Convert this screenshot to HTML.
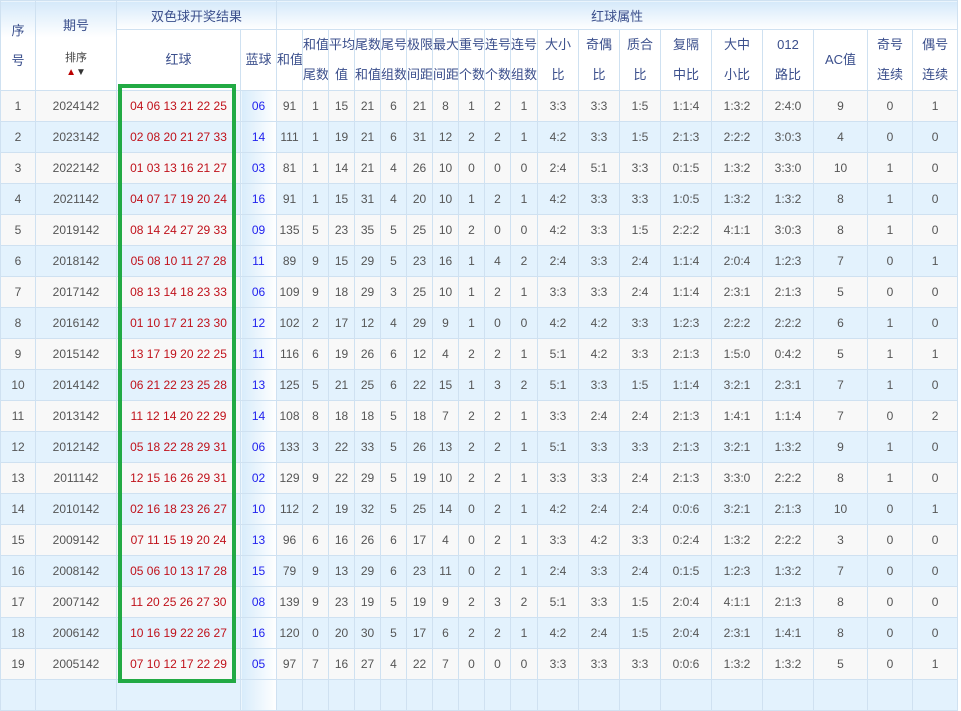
<!DOCTYPE html>
<html><head><meta charset="utf-8"><style>
body{margin:0;background:#fff;width:961px;height:685px;overflow:hidden;position:relative;font-family:"Liberation Sans","Noto Sans CJK SC",sans-serif;}
table{border-collapse:collapse;table-layout:fixed;width:957px;font-size:12px;color:#555;}
td,th{border:1px solid #cfe1f1;text-align:center;padding:0;overflow:hidden;white-space:nowrap;font-weight:normal;}
th{color:#3b4f8c;background:#fff;font-size:13px;}
tr.h1 th{height:28px;background:linear-gradient(#d5e9fa,#fff);}
tr.h2 th{height:60px;line-height:30px;}
tbody tr{height:31px;}
tbody tr:nth-child(odd) td{background:#f8f8f8;}
tbody tr:nth-child(even) td{background:#e3f2fd;}
td.r{color:#c0111a;}
tbody tr td.b{color:#2222ee;background:linear-gradient(90deg,#d8ecfb,#fff);}
.box{position:absolute;left:118px;top:84px;width:118px;height:599px;border:4px solid #22aa44;box-sizing:border-box;}
.ar{font-size:10px;line-height:8px;display:block;margin-top:4px}
</style></head><body>
<table>
<colgroup><col style="width:35px"><col style="width:81px"><col style="width:124px"><col style="width:36px">
<col style="width:26px"><col style="width:26px"><col style="width:26px"><col style="width:26px"><col style="width:26px"><col style="width:26px"><col style="width:26px"><col style="width:26px"><col style="width:26px"><col style="width:27px">
<col style="width:41px"><col style="width:41px"><col style="width:41px"><col style="width:51px"><col style="width:51px"><col style="width:51px"><col style="width:54px"><col style="width:45px"><col style="width:45px"></colgroup>
<thead>
<tr class="h1"><th rowspan="2" style="line-height:30px;background:linear-gradient(#d5e9fa,#fff 40%)">序<br>号</th><th rowspan="2" style="background:linear-gradient(#d5e9fa,#fff 40%)">期号<br><br><span style="font-size:11px;color:#444">排序</span><span class="ar"><span style="color:#b00">&#9650;</span><span style="color:#333">&#9660;</span></span></th><th colspan="2">双色球开奖结果</th><th colspan="19">红球属性</th></tr>
<tr class="h2"><th>红球</th><th>蓝球</th><th>和值</th><th>和值<br>尾数</th><th>平均<br>值</th><th>尾数<br>和值</th><th>尾号<br>组数</th><th>极限<br>间距</th><th>最大<br>间距</th><th>重号<br>个数</th><th>连号<br>个数</th><th>连号<br>组数</th><th>大小<br>比</th><th>奇偶<br>比</th><th>质合<br>比</th><th>复隔<br>中比</th><th>大中<br>小比</th><th>012<br>路比</th><th>AC值</th><th>奇号<br>连续</th><th>偶号<br>连续</th></tr>
</thead>
<tbody>
<tr><td>1</td><td>2024142</td><td class="r">04 06 13 21 22 25</td><td class="b">06</td><td>91</td><td>1</td><td>15</td><td>21</td><td>6</td><td>21</td><td>8</td><td>1</td><td>2</td><td>1</td><td>3:3</td><td>3:3</td><td>1:5</td><td>1:1:4</td><td>1:3:2</td><td>2:4:0</td><td>9</td><td>0</td><td>1</td></tr>
<tr><td>2</td><td>2023142</td><td class="r">02 08 20 21 27 33</td><td class="b">14</td><td>111</td><td>1</td><td>19</td><td>21</td><td>6</td><td>31</td><td>12</td><td>2</td><td>2</td><td>1</td><td>4:2</td><td>3:3</td><td>1:5</td><td>2:1:3</td><td>2:2:2</td><td>3:0:3</td><td>4</td><td>0</td><td>0</td></tr>
<tr><td>3</td><td>2022142</td><td class="r">01 03 13 16 21 27</td><td class="b">03</td><td>81</td><td>1</td><td>14</td><td>21</td><td>4</td><td>26</td><td>10</td><td>0</td><td>0</td><td>0</td><td>2:4</td><td>5:1</td><td>3:3</td><td>0:1:5</td><td>1:3:2</td><td>3:3:0</td><td>10</td><td>1</td><td>0</td></tr>
<tr><td>4</td><td>2021142</td><td class="r">04 07 17 19 20 24</td><td class="b">16</td><td>91</td><td>1</td><td>15</td><td>31</td><td>4</td><td>20</td><td>10</td><td>1</td><td>2</td><td>1</td><td>4:2</td><td>3:3</td><td>3:3</td><td>1:0:5</td><td>1:3:2</td><td>1:3:2</td><td>8</td><td>1</td><td>0</td></tr>
<tr><td>5</td><td>2019142</td><td class="r">08 14 24 27 29 33</td><td class="b">09</td><td>135</td><td>5</td><td>23</td><td>35</td><td>5</td><td>25</td><td>10</td><td>2</td><td>0</td><td>0</td><td>4:2</td><td>3:3</td><td>1:5</td><td>2:2:2</td><td>4:1:1</td><td>3:0:3</td><td>8</td><td>1</td><td>0</td></tr>
<tr><td>6</td><td>2018142</td><td class="r">05 08 10 11 27 28</td><td class="b">11</td><td>89</td><td>9</td><td>15</td><td>29</td><td>5</td><td>23</td><td>16</td><td>1</td><td>4</td><td>2</td><td>2:4</td><td>3:3</td><td>2:4</td><td>1:1:4</td><td>2:0:4</td><td>1:2:3</td><td>7</td><td>0</td><td>1</td></tr>
<tr><td>7</td><td>2017142</td><td class="r">08 13 14 18 23 33</td><td class="b">06</td><td>109</td><td>9</td><td>18</td><td>29</td><td>3</td><td>25</td><td>10</td><td>1</td><td>2</td><td>1</td><td>3:3</td><td>3:3</td><td>2:4</td><td>1:1:4</td><td>2:3:1</td><td>2:1:3</td><td>5</td><td>0</td><td>0</td></tr>
<tr><td>8</td><td>2016142</td><td class="r">01 10 17 21 23 30</td><td class="b">12</td><td>102</td><td>2</td><td>17</td><td>12</td><td>4</td><td>29</td><td>9</td><td>1</td><td>0</td><td>0</td><td>4:2</td><td>4:2</td><td>3:3</td><td>1:2:3</td><td>2:2:2</td><td>2:2:2</td><td>6</td><td>1</td><td>0</td></tr>
<tr><td>9</td><td>2015142</td><td class="r">13 17 19 20 22 25</td><td class="b">11</td><td>116</td><td>6</td><td>19</td><td>26</td><td>6</td><td>12</td><td>4</td><td>2</td><td>2</td><td>1</td><td>5:1</td><td>4:2</td><td>3:3</td><td>2:1:3</td><td>1:5:0</td><td>0:4:2</td><td>5</td><td>1</td><td>1</td></tr>
<tr><td>10</td><td>2014142</td><td class="r">06 21 22 23 25 28</td><td class="b">13</td><td>125</td><td>5</td><td>21</td><td>25</td><td>6</td><td>22</td><td>15</td><td>1</td><td>3</td><td>2</td><td>5:1</td><td>3:3</td><td>1:5</td><td>1:1:4</td><td>3:2:1</td><td>2:3:1</td><td>7</td><td>1</td><td>0</td></tr>
<tr><td>11</td><td>2013142</td><td class="r">11 12 14 20 22 29</td><td class="b">14</td><td>108</td><td>8</td><td>18</td><td>18</td><td>5</td><td>18</td><td>7</td><td>2</td><td>2</td><td>1</td><td>3:3</td><td>2:4</td><td>2:4</td><td>2:1:3</td><td>1:4:1</td><td>1:1:4</td><td>7</td><td>0</td><td>2</td></tr>
<tr><td>12</td><td>2012142</td><td class="r">05 18 22 28 29 31</td><td class="b">06</td><td>133</td><td>3</td><td>22</td><td>33</td><td>5</td><td>26</td><td>13</td><td>2</td><td>2</td><td>1</td><td>5:1</td><td>3:3</td><td>3:3</td><td>2:1:3</td><td>3:2:1</td><td>1:3:2</td><td>9</td><td>1</td><td>0</td></tr>
<tr><td>13</td><td>2011142</td><td class="r">12 15 16 26 29 31</td><td class="b">02</td><td>129</td><td>9</td><td>22</td><td>29</td><td>5</td><td>19</td><td>10</td><td>2</td><td>2</td><td>1</td><td>3:3</td><td>3:3</td><td>2:4</td><td>2:1:3</td><td>3:3:0</td><td>2:2:2</td><td>8</td><td>1</td><td>0</td></tr>
<tr><td>14</td><td>2010142</td><td class="r">02 16 18 23 26 27</td><td class="b">10</td><td>112</td><td>2</td><td>19</td><td>32</td><td>5</td><td>25</td><td>14</td><td>0</td><td>2</td><td>1</td><td>4:2</td><td>2:4</td><td>2:4</td><td>0:0:6</td><td>3:2:1</td><td>2:1:3</td><td>10</td><td>0</td><td>1</td></tr>
<tr><td>15</td><td>2009142</td><td class="r">07 11 15 19 20 24</td><td class="b">13</td><td>96</td><td>6</td><td>16</td><td>26</td><td>6</td><td>17</td><td>4</td><td>0</td><td>2</td><td>1</td><td>3:3</td><td>4:2</td><td>3:3</td><td>0:2:4</td><td>1:3:2</td><td>2:2:2</td><td>3</td><td>0</td><td>0</td></tr>
<tr><td>16</td><td>2008142</td><td class="r">05 06 10 13 17 28</td><td class="b">15</td><td>79</td><td>9</td><td>13</td><td>29</td><td>6</td><td>23</td><td>11</td><td>0</td><td>2</td><td>1</td><td>2:4</td><td>3:3</td><td>2:4</td><td>0:1:5</td><td>1:2:3</td><td>1:3:2</td><td>7</td><td>0</td><td>0</td></tr>
<tr><td>17</td><td>2007142</td><td class="r">11 20 25 26 27 30</td><td class="b">08</td><td>139</td><td>9</td><td>23</td><td>19</td><td>5</td><td>19</td><td>9</td><td>2</td><td>3</td><td>2</td><td>5:1</td><td>3:3</td><td>1:5</td><td>2:0:4</td><td>4:1:1</td><td>2:1:3</td><td>8</td><td>0</td><td>0</td></tr>
<tr><td>18</td><td>2006142</td><td class="r">10 16 19 22 26 27</td><td class="b">16</td><td>120</td><td>0</td><td>20</td><td>30</td><td>5</td><td>17</td><td>6</td><td>2</td><td>2</td><td>1</td><td>4:2</td><td>2:4</td><td>1:5</td><td>2:0:4</td><td>2:3:1</td><td>1:4:1</td><td>8</td><td>0</td><td>0</td></tr>
<tr><td>19</td><td>2005142</td><td class="r">07 10 12 17 22 29</td><td class="b">05</td><td>97</td><td>7</td><td>16</td><td>27</td><td>4</td><td>22</td><td>7</td><td>0</td><td>0</td><td>0</td><td>3:3</td><td>3:3</td><td>3:3</td><td>0:0:6</td><td>1:3:2</td><td>1:3:2</td><td>5</td><td>0</td><td>1</td></tr>
<tr><td></td><td></td><td class="r"></td><td class="b"></td><td></td><td></td><td></td><td></td><td></td><td></td><td></td><td></td><td></td><td></td><td></td><td></td><td></td><td></td><td></td><td></td><td></td><td></td><td></td></tr>
</tbody></table>
<div class="box"></div>
</body></html>
